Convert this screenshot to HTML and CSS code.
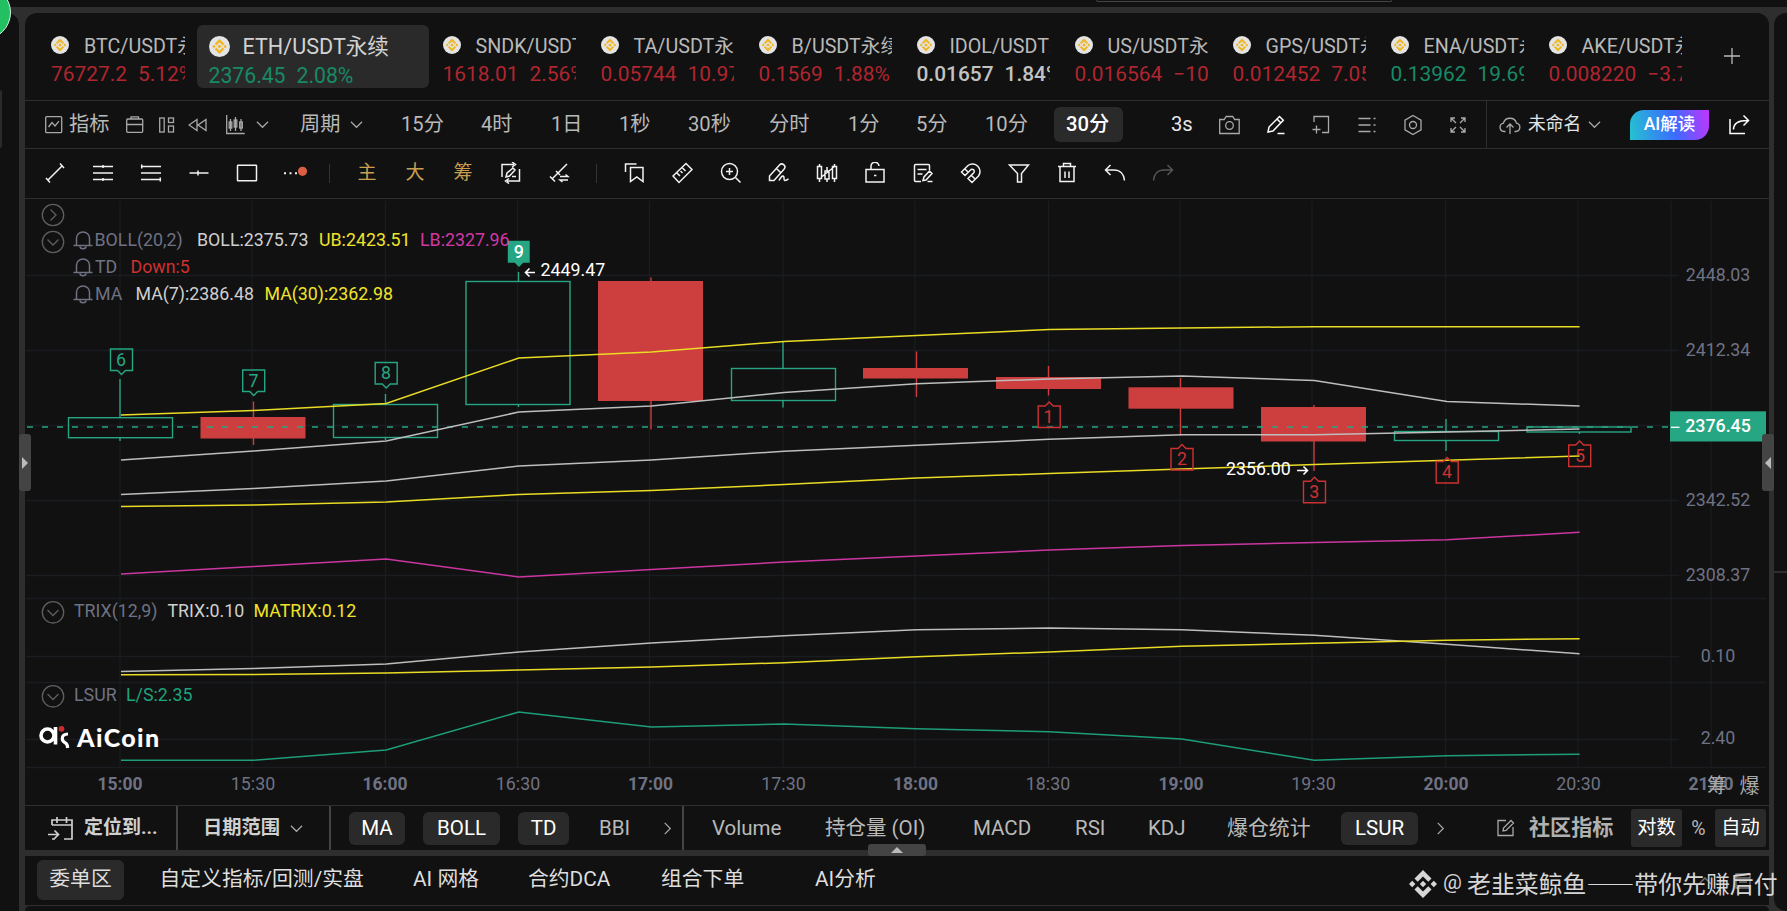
FILE: index.html
```html
<!DOCTYPE html>
<html lang="zh-CN">
<head>
    <meta charset="UTF-8">
    <title>AiCoin - ETH/USDT永续</title>
    <link rel="stylesheet" href="styles.css">
</head>
<body>
<svg class="defs" width="0" height="0">
    <symbol id="bnb" viewBox="0 0 20 20">
        <circle cx="10" cy="10" r="10" fill="#e4e4e4"/>
        <g fill="none" stroke="#efb621" stroke-width="2.2">
            <path d="M6.200 8.2 10 4.400l3.800 3.800M6.200 11.8l3.800 3.800 3.800-3.800"/>
        </g>
        <path d="M10 8 12 10 10 12 8 10zM4.700 8.400 6.300 10 4.700 11.600 3.100 10zM15.300 8.400l1.600 1.600-1.600 1.600-1.600-1.600z" fill="#efb621"/>
    </symbol>
    <symbol id="down" viewBox="0 0 14 14"><path d="M1 4l6 6 6-6"/></symbol>
    <symbol id="right" viewBox="0 0 14 14"><path d="M4 1l6 6-6 6"/></symbol>
</svg>
<div class="topbar"><div class="search"></div></div>
<div class="workspace">
    <aside class="side left"><div class="side-box"></div></aside>
    <main>
        <section class="panel">
            <div class="tabs">
                <div class="tab"><svg class="coin"><use href="#bnb"/></svg><span class="name">BTC/USDT永续</span><p class="down">76727.2<i></i>5.12%</p></div>
                <div class="tab active"><svg class="coin"><use href="#bnb"/></svg><span class="name">ETH/USDT永续</span><p class="up">2376.45<i></i>2.08%</p></div>
                <div class="tab"><svg class="coin"><use href="#bnb"/></svg><span class="name">SNDK/USDT永续</span><p class="down">1618.01<i></i>2.56%</p></div>
                <div class="tab"><svg class="coin"><use href="#bnb"/></svg><span class="name">TA/USDT永续</span><p class="down">0.05744<i></i>10.97%</p></div>
                <div class="tab"><svg class="coin"><use href="#bnb"/></svg><span class="name">B/USDT永续</span><p class="down">0.1569<i></i>1.88%</p></div>
                <div class="tab"><svg class="coin"><use href="#bnb"/></svg><span class="name">IDOL/USDT永续</span><p class="flat">0.01657<i></i>1.84%</p></div>
                <div class="tab"><svg class="coin"><use href="#bnb"/></svg><span class="name">US/USDT永续</span><p class="down">0.016564<i></i>−10.2%</p></div>
                <div class="tab"><svg class="coin"><use href="#bnb"/></svg><span class="name">GPS/USDT永续</span><p class="down">0.012452<i></i>7.05%</p></div>
                <div class="tab"><svg class="coin"><use href="#bnb"/></svg><span class="name">ENA/USDT永续</span><p class="up">0.13962<i></i>19.69%</p></div>
                <div class="tab"><svg class="coin"><use href="#bnb"/></svg><span class="name">AKE/USDT永续</span><p class="down">0.008220<i></i>−3.7%</p></div>
                <svg class="add" viewBox="0 0 16 16"><path d="M8 0v16M0 8h16"/></svg>
            </div>

            <div class="periods">
                <svg class="ic" viewBox="0 0 22 22"><rect x=".7" y="2.7" width="16" height="16" rx="1"/><path d="M3.5 13l3.5-4.500 3 3.500 4-4.800"/></svg>
                <span>指标</span>
                <svg class="ic" viewBox="0 0 22 22"><rect x=".7" y="5" width="16" height="13.300" rx="1"/><path d="M5 5V2.800h7.500V5M.7 10.500h16"/></svg>
                <svg class="ic" viewBox="0 0 22 22"><rect x=".7" y="4" width="4.500" height="14"/><rect x="9.500" y="4" width="5" height="4.500"/><rect x="9.500" y="12" width="5" height="6"/></svg>
                <svg class="ic" viewBox="0 0 22 22"><path d="M9 5.500v11L1 11zM18 5.500v11L10 11z"/></svg>
                <svg class="ic" viewBox="0 0 22 22"><path d="M.7 1v18.500h18M4.500 5v12M9.500 3v14M15 5v12"/><rect x="3.200" y="8" width="2.600" height="6"/><rect x="8.200" y="6" width="2.600" height="7"/><rect x="13.700" y="8" width="2.600" height="6"/></svg>
                <svg class="arrow"><use href="#down"/></svg>
                <span>周期</span>
                <svg class="arrow"><use href="#down"/></svg>
                <span>15分</span>
                <span>4时</span>
                <span>1日</span>
                <span>1秒</span>
                <span>30秒</span>
                <span>分时</span>
                <span>1分</span>
                <span>5分</span>
                <span>10分</span>
                <span class="current">30分</span>
                <span class="bright">3s</span>
                <svg class="ic" viewBox="0 0 22 22"><path d="M.7 5.500h4.500l2-3h6.500l2 3h4.500v14H.7z"/><circle cx="10.500" cy="11.500" r="3.800"/></svg>
                <svg class="ic white" viewBox="0 0 22 22"><path d="M1 18l1-5L12.500 2.500l3.800 3.800L6 17zM10.500 19.500h7M10 5l4 4"/></svg>
                <svg class="ic" viewBox="0 0 22 22"><path d="M2 8V2.500h14.500v16H10M4.500 11.500v8M.5 15.500h8"/></svg>
                <svg class="ic" viewBox="0 0 22 22"><path d="M.5 4.500h12M.5 11h12M.5 17.500h12M15.500 4.500h2M15.500 11h2M15.500 17.500h2"/></svg>
                <svg class="ic" viewBox="0 0 22 22"><path d="M9 1.500l8 4.700v9.600l-8 4.700-8-4.700V6.200z"/><circle cx="9" cy="11" r="3.500"/></svg>
                <svg class="ic" viewBox="0 0 22 22"><path d="M1 8V4h4M1 4l5 5M11 4h4v4M15 4l-5 5M1 14v4h4M1 18l5-5M11 18h4v-4M15 18l-5-5"/></svg>
                <div class="cloud">
                    <svg class="ic" viewBox="0 0 22 22"><path d="M6.500 17.500H5a4.200 4.200 0 0 1-.6-8.300 6.800 6.800 0 0 1 13.100 0 4.200 4.200 0 0 1-.5 8.300h-1.500M11 20v-9.500M7.500 13.500L11 10l3.500 3.500"/></svg>
                    <span>未命名</span>
                    <svg class="arrow"><use href="#down"/></svg>
                </div>
                <div class="ai">AI解读</div>
                <svg class="ic white" viewBox="0 0 22 22"><path d="M1 5v14.500h15M4.500 15.500c0-6 4-9 14-9M14.500 1.500l5 5-5 5"/></svg>
            </div>

            <div class="tools">
                <svg class="ic" viewBox="0 0 22 22"><path d="M4 18L18 4M16 1.500l4 4.500M2 16l4 4.500"/></svg>
                <svg class="ic" viewBox="0 0 22 22"><path d="M1 4.500h20M1 11h20M1 17.500h20M11 3v3M11 16v3"/></svg>
                <svg class="ic" viewBox="0 0 22 22"><path d="M1 4.500h20M1 11h20M1 17.500h20M1.700 2.500v4M20.300 15.500v4"/></svg>
                <svg class="ic" viewBox="0 0 22 22"><path d="M1.500 11h19M10 8.500v5"/></svg>
                <svg class="ic" viewBox="0 0 22 22"><rect x="1.500" y="3.300" width="19" height="15.500" rx=".5"/></svg>
                <svg class="ic more" viewBox="0 0 22 22"><path class="dots" d="M0 11.300h2M5.500 11.300h2M11 11.300h2"/><circle cx="18.500" cy="9.300" r="4.600" class="dot"/></svg>
                <b class="sep"></b>
                <span>主</span>
                <span>大</span>
                <span>筹</span>
                <svg class="ic" viewBox="0 0 22 22"><path d="M2 15V2.500h12M12 0l3.500 2.500L12 5M19.500 7v12H7M9 16.500L5.500 19 9 21.500M6 15l1-4 6-5 2 2-5.500 6zM12 14.500h4"/></svg>
                <svg class="ic" viewBox="0 0 22 22"><path d="M4 17L19 2M2 14.500l5 5M8 9l4 4M12 14.500h8l-2.500-2M20 18h-8l2.500 2"/></svg>
                <b class="sep"></b>
                <svg class="ic" viewBox="0 0 22 22"><path d="M1.500 10V2h11M6.500 5.500h12.500v14l-6.200-4.500-6.300 4.500z"/></svg>
                <svg class="ic" viewBox="0 0 22 22"><path d="M1 14L14 1.500l6 6L7 20.500zM5 11l3 3M8.500 9l2 2M10.500 6l3 3"/></svg>
                <svg class="ic" viewBox="0 0 22 22"><circle cx="9.500" cy="9.500" r="8"/><path d="M15.500 15.500l5 5M9.500 6v7M6 9.500h7"/></svg>
                <svg class="ic" viewBox="0 0 22 22"><path d="M1.500 18.500v-4.500L11.500 3a2.500 2.500 0 0 1 4.500 4.200L6 18.500zM8.500 6.500l4.500 4.500M11 18.500c3-5.500 5-5.500 5-2.500s0 3.500 4.500 1"/></svg>
                <svg class="ic" viewBox="0 0 22 22"><path d="M3.500 2v2.500M3.500 16.500V20M11 5v4M11 17v3M18.500 2v2.500M18.500 16.500V20"/><path d="M1.500 4.500h4v12h-4zM9 9h4v8H9zM16.500 4.500h4v12h-4zM5.500 15L18 5"/></svg>
                <svg class="ic" viewBox="0 0 22 22"><rect x="2" y="7.500" width="18" height="12.500"/><path d="M7 7.500V4.500a4 4 0 0 1 8-.5M10 13.500h2.400"/></svg>
                <svg class="ic" viewBox="0 0 22 22"><path d="M17.500 8V3.500a1 1 0 0 0-1-1h-13a1 1 0 0 0-1 1v15a1 1 0 0 0 1 1H9M5.500 7.500h9M5.500 12h5M11 18.500l1-3.500 5.500-6 2.500 2.500-6 6.500zM15.500 19.500h5"/></svg>
                <svg class="ic" viewBox="0 0 22 22"><path d="M1.500 10l6.500-6.500a7.500 7.500 0 0 1 10.500 10.500L12 20.500l-4-4 6-6a2.200 2.200 0 0 0-3-3l-6 6zM5 7l3.500 3.500M11.500 13.500l3.500 3.500"/></svg>
                <svg class="ic" viewBox="0 0 22 22"><path d="M1.500 3h19l-7 8.500v8.500h-4v-8.500z"/></svg>
                <svg class="ic" viewBox="0 0 22 22"><path d="M2 4.500h18M7.500 4V1.500h7V4M4 5v14.500h14V5M9 9.500v6.500M13 9.500v6.500"/></svg>
                <svg class="ic" viewBox="0 0 22 22"><path d="M6.500 3L1.500 8l5 5M1.500 8H10c6 0 10 4 10.500 10.500"/></svg>
                <svg class="ic off" viewBox="0 0 22 22"><path d="M15.500 3l5 5-5 5M20.500 8H12C6 8 2 12 1.500 18.500"/></svg>
            </div>

            <svg class="chart" viewBox="25 199 1744 606">
                <g class="grid">
                    <path d="M120 201V768M252 201V768M385.500 201V768M517.500 201V768M649.500 201V768M783 201V768M915 201V768M1048.500 201V768M1180 201V768M1312 201V768M1445.500 201V768M1578 201V768M1671 201V768M1711 201V768"/>
                    <path d="M26 275.500H1679M26 350.500H1679M26 425.500H1679M26 500.500H1679M26 575.500H1679M26 656.500H1679M26 739.500H1679"/>
                    <path d="M26 598.500H1766M26 682.500H1766M26 767.500H1766"/>
                </g>
                <!-- candles -->
                <g class="bull">
                    <path d="M120 379V418M120 438V441M385.500 394V405M385.500 438V440M518.500 272V282M518.500 405V407M783 341V369M783 400V407.500M1446 419V432M1446 441V451M1579.500 432V434"/>
                    <rect x="68.500" y="417.700" width="104" height="20"/>
                    <rect x="333.500" y="404.500" width="104" height="33"/>
                    <rect x="466" y="281.500" width="104" height="123"/>
                    <rect x="731.500" y="368.500" width="104" height="32"/>
                    <rect x="1394.500" y="431.500" width="104" height="9"/>
                    <rect x="1527" y="427" width="104" height="5"/>
                </g>
                <g class="bear">
                    <path d="M253.500 401.500V445M651 277.500V429.500M916.500 351.500V397M1048.500 366V395.500M1180.500 378V435.500M1314 405V471"/>
                    <rect x="200.500" y="417" width="105" height="21.500"/>
                    <rect x="598" y="281" width="105" height="120"/>
                    <rect x="863" y="368" width="105" height="10.500"/>
                    <rect x="996" y="377" width="105" height="12"/>
                    <rect x="1128.500" y="387.300" width="105" height="21.400"/>
                    <rect x="1261" y="407" width="105" height="34.500"/>
                </g>
                <path class="last" d="M27 427H1671"/>
                <g class="line">
                    <polyline class="yellow" points="121,415 253.600,410.500 386.200,403.500 518.800,358 651.400,352 784,341.500 916.600,335.500 1049.200,329.500 1181.800,328 1314.400,326.700 1447,326.700 1579.600,326.700"/>
                    <polyline class="white" points="121,460 253.600,451 386.200,441 518.800,412 651.400,406 784,392.500 916.600,383.700 1049.200,379 1181.800,376 1314.400,380.500 1447,401.500 1579.600,406"/>
                    <polyline class="white" points="121,494.500 253.600,488.500 386.200,481 518.800,466 651.400,460 784,451.300 916.600,445.300 1049.200,439.300 1181.800,434.700 1314.400,434.700 1447,432 1579.600,429"/>
                    <polyline class="yellow" points="121,506.500 253.600,505 386.200,502 518.800,494.500 651.400,490.500 784,484.500 916.600,478 1049.200,473.500 1181.800,469 1314.400,464.600 1447,460.300 1579.600,456"/>
                    <polyline class="pink" points="121,574 253.600,566.500 386.200,559 518.800,577 651.400,569.500 784,562 916.600,556 1049.200,550 1181.800,545.500 1314.400,542.600 1447,539.700 1579.600,532.300"/>
                    <polyline class="white" points="121,671.500 253.600,668.600 386.200,664 518.800,652 651.400,643 784,635.700 916.600,629.700 1049.200,628 1181.800,629.700 1314.400,635.300 1447,644.300 1579.600,653.700"/>
                    <polyline class="yellow" points="121,674.700 253.600,674.500 386.200,673 518.800,670 651.400,667 784,662.700 916.600,656.700 1049.200,652 1181.800,646.300 1314.400,643.300 1447,640.300 1579.600,638.700"/>
                    <polyline class="green" points="121,760.300 253.600,760.300 386.200,750 518.800,712 651.400,727 784,724 916.600,728.700 1049.200,731.700 1181.800,739 1314.400,760.300 1447,755.700 1579.600,754.200"/>
                </g>
                <!-- TD sequence marks -->
                <g class="td td-up">
                    <path d="M110.500 349h22v21.500h-7l-4 4-4-4h-7z"/><text x="121" y="366">6</text>
                    <path d="M242.700 370h22v21.500h-7l-4 4-4-4h-7z"/><text x="253.500" y="387">7</text>
                    <path d="M375.200 362.500h22V384h-7l-4 4-4-4h-7z"/><text x="386" y="379">8</text>
                    <path class="solid" d="M508.500 241.500h20.500V262h-6l-4 4-4-4h-6.500z"/><text class="solid-text" x="518.700" y="258">9</text>
                </g>
                <g class="td td-down">
                    <path d="M1038.200 427.500h22V406h-7l-4-4-4 4h-7z"/><text x="1048.500" y="423">1</text>
                    <path d="M1171 470h22v-21.500h-7l-4-4-4 4h-7z"/><text x="1182" y="465">2</text>
                    <path d="M1303.500 502.700h22v-21.500h-7l-4-4-4 4h-7z"/><text x="1314.300" y="498">3</text>
                    <path d="M1436.200 483h22v-21.500h-7l-4-4-4 4h-7z"/><text x="1447" y="478">4</text>
                    <path d="M1568.700 466.500h22V445h-7l-4-4-4 4h-7z"/><text x="1580" y="461.500">5</text>
                </g>
                <g class="note">
                    <path d="M535 272.500h-9.500M529.500 268.500l-4 4 4 4M1297 470.500h10.500M1303.500 466.500l4 4-4 4"/>
                    <text x="540.500" y="276.200">2449.47</text>
                    <text x="1226" y="475">2356.00</text>
                </g>
                <rect class="price-tag" x="1670" y="411.300" width="96" height="30.200"/>
                <path class="tick" d="M1671 427.300h8.500"/>
                <g class="axis">
                    <text x="1718" y="280.500">2448.03</text>
                    <text x="1718" y="355.500">2412.34</text>
                    <text class="now" x="1718" y="432">2376.45</text>
                    <text x="1718" y="505.500">2342.52</text>
                    <text x="1718" y="580.500">2308.37</text>
                    <text x="1718" y="661.500">0.10</text>
                    <text x="1718" y="744">2.40</text>
                    <text class="hour" x="120" y="789.500">15:00</text>
                    <text x="253" y="789.500">15:30</text>
                    <text class="hour" x="385" y="789.500">16:00</text>
                    <text x="518" y="789.500">16:30</text>
                    <text class="hour" x="650.500" y="789.500">17:00</text>
                    <text x="783.500" y="789.500">17:30</text>
                    <text class="hour" x="915.500" y="789.500">18:00</text>
                    <text x="1048" y="789.500">18:30</text>
                    <text class="hour" x="1181" y="789.500">19:00</text>
                    <text x="1313.500" y="789.500">19:30</text>
                    <text class="hour" x="1446" y="789.500">20:00</text>
                    <text x="1578.500" y="789.500">20:30</text>
                    <text class="hour" x="1711" y="789.500">21:00</text>
                    <text class="cjk" x="1717" y="793">筹</text>
                    <text class="cjk" x="1749.500" y="793">爆</text>
                </g>
                <!-- legends -->
                <g class="fold">
                    <circle cx="53" cy="215" r="10.700"/><path d="M50.500 209.500l5.500 5.500-5.500 5.500"/>
                    <circle cx="53" cy="242" r="10.700"/><path d="M47.500 239.500l5.500 5.500 5.500-5.500"/>
                    <circle cx="53" cy="612.300" r="10.700"/><path d="M47.500 610l5.500 5.500 5.500-5.500"/>
                    <circle cx="53" cy="696.300" r="10.700"/><path d="M47.500 694l5.500 5.500 5.500-5.500"/>
                </g>
                <g class="bell">
                    <path id="bell" d="M73.500 245.500h19M76.500 245.500v-7.500a6.500 6 0 0 1 13 0v7.500M80 246.500a3 2.200 0 0 0 6 0"/>
                    <use href="#bell" y="27"/>
                    <use href="#bell" y="54"/>
                </g>
                <g class="legend">
                    <text class="muted" x="94.500" y="246">BOLL(20,2)</text>
                    <text class="white" x="197" y="246">BOLL:2375.73</text>
                    <text class="yellow" x="319" y="246">UB:2423.51</text>
                    <text class="pink" x="420" y="246">LB:2327.96</text>
                    <text class="muted" x="95" y="273">TD</text>
                    <text class="red" x="130.500" y="273">Down:5</text>
                    <text class="muted" x="95" y="300">MA</text>
                    <text class="white" x="135.500" y="300">MA(7):2386.48</text>
                    <text class="yellow" x="264.500" y="300">MA(30):2362.98</text>
                    <text class="muted" x="74" y="616.500">TRIX(12,9)</text>
                    <text class="white" x="167.500" y="616.500">TRIX:0.10</text>
                    <text class="yellow" x="253.500" y="616.500">MATRIX:0.12</text>
                    <text class="muted" x="74" y="700.500">LSUR</text>
                    <text class="green" x="126" y="700.500">L/S:2.35</text>
                </g>
                <g class="brand">
                    <circle cx="47.500" cy="735.500" r="6.500"/>
                    <path d="M55.500 727v17.500"/>
                    <path class="thin" d="M68 734c-4 0-5.700 1.800-5.700 4.500 0 2.600 1.700 3.800 3.200 4.500 1.400.7 2 2.500 2.200 5"/>
                    <circle class="brand-dot" cx="61.500" cy="728.800" r="2.900"/>
                    <text x="77" y="747">AiCoin</text>
                </g>
            </svg>

            <div class="indicators">
                <svg class="cal" viewBox="0 0 26 26"><path d="M4 10V5h20v19H16M4 10h20M9 2v6M18.500 2v6M0 19.500h10M6.500 15.500l4 4-4 4M7 24h-3"/></svg>
                <strong class="locate">定位到...</strong>
                <div class="range"><strong>日期范围</strong><svg class="arrow"><use href="#down"/></svg></div>
                <div class="main-ind">
                    <span class="on ma">MA</span>
                    <span class="on boll">BOLL</span>
                    <span class="on tdi">TD</span>
                    <span class="bbi">BBI</span>
                    <svg class="arrow"><use href="#right"/></svg>
                </div>
                <div class="sub-ind">
                    <span>Volume</span>
                    <span>持仓量 (OI)</span>
                    <span>MACD</span>
                    <span>RSI</span>
                    <span>KDJ</span>
                    <span class="liq">爆仓统计</span>
                    <span class="on lsur">LSUR</span>
                    <svg class="arrow"><use href="#right"/></svg>
                </div>
                <div class="scale">
                    <svg class="edit" viewBox="0 0 18 18"><path d="M9 1.500H1v15h15V8M6 12l.5-3L14 1.500l2.500 2.500L9 11.500z"/></svg>
                    <strong>社区指标</strong>
                    <span class="sq">对数</span>
                    <span class="pct">%</span>
                    <span class="sq">自动</span>
                </div>
            </div>
        </section>
        <section class="orders">
            <span class="on">委单区</span>
            <span>自定义指标/回测/实盘</span>
            <span>AI 网格</span>
            <span>合约DCA</span>
            <span>组合下单</span>
            <span>AI分析</span>
            <svg class="win" viewBox="0 0 16 16"><path d="M2 11l6-6 6 6"/></svg>
            <svg class="win" viewBox="0 0 16 16"><path d="M1 1h14v14H1zM1 5h14M4 9h8"/></svg>
        </section>
        <section class="next"></section>
        <div class="handle handle-left"></div>
        <div class="handle handle-right"></div>
        <div class="handle handle-bottom"></div>
    </main>
    <aside class="side right"></aside>
</div>
<div class="bubble"></div>
<div class="watermark">
    <svg viewBox="0 0 28 28"><path d="M14 0l8.500 8.500-3.200 3.200L14 6.400l-5.300 5.300-3.200-3.200zM14 28l8.500-8.500-3.200-3.200-5.300 5.300-5.300-5.300-3.200 3.200zM14 10.800l3.200 3.200-3.200 3.200-3.200-3.200zM3.200 10.800L6.400 14l-3.200 3.200L0 14zM24.800 10.800L28 14l-3.200 3.200-3.200-3.200z"/></svg>
    <span class="at">@</span><span>老韭菜鲸鱼——带你先赚后付</span>
</div>
</body>
</html>
```
FILE: styles.css
```css
body {
    margin: 0;
    width: 1787px;
    height: 911px;
    overflow: hidden;
    position: relative;
    background: #2e2e2e;
    color: #b9b9b9;
    font-family: Roboto, "Noto Sans CJK SC", sans-serif;
    font-size: 20px;
}

.defs {
    display: block;
}

svg {
    flex: none;
}

.topbar {
    height: 7px;
    background: #111;
}

.search {
    box-sizing: border-box;
    width: 296px;
    height: 2px;
    margin-left: 1096px;
    border: 1px solid #444;
    border-top: 0;
    border-radius: 0 0 4px 4px;
}

.workspace {
    display: grid;
    grid-template-columns: 19px 1744px 13px;
    column-gap: 6px;
    padding-top: 6px;
    height: 898px;
}

.side {
    background: #111;
}

.left {
    border-radius: 0 12px 0 0;
    padding-top: 77px;
}

.side-box {
    width: 2px;
    height: 58px;
    background: #2a2a2a;
    border-radius: 0 4px 4px 0;
}

.right {
    margin-left: -1px;
    border-radius: 12px 0 0 12px;
    background: linear-gradient(#111 558px, #2e2e2e 558px, #2e2e2e 560px, #111 560px);
}

main {
    position: relative;
}

.panel {
    height: 837px;
    background: #111;
    border-radius: 12px 12px 0 0;
}

/* Market tabs */
.tabs {
    display: flex;
    box-sizing: border-box;
    height: 88px;
    padding: 12px 0 0 26px;
    border-bottom: 1px solid #2e2e2e;
}

.tab {
    width: 133.5px;
    height: 63px;
    margin-right: 24.5px;
    overflow: hidden;
    white-space: nowrap;
    font-size: 19.7px;
}

.coin {
    width: 18px;
    height: 18px;
    margin: 11px 15px 0 0;
    vertical-align: top;
}

.name {
    display: inline-block;
    line-height: 28px;
    margin-top: 8px;
}

.tab p {
    margin: 0;
    line-height: 27px;
    font-size: 20.9px;
}

.tab i {
    display: inline-block;
    width: 11px;
}

.tab.active {
    box-sizing: border-box;
    width: 232px;
    margin: 0 14px 0 -12.500px;
    padding-left: 12px;
    background: #2a2a2a;
    border-radius: 6px;
    font-size: 21.6px;
    color: #d2d2d2;
}

.active .coin {
    width: 21px;
    height: 21px;
    margin-right: 13px;
}

.active p {
    line-height: 30px;
    font-size: 21.2px;
}

.down {
    color: #b0252f;
}

.up {
    color: #178a66;
}

.flat {
    color: #c2c2c2;
    font-weight: 500;
}

.add {
    width: 16px;
    height: 16px;
    margin: 23px 0 0 17px;
    stroke: #b9b9b9;
    stroke-width: 1.300;
}

/* Toolbars */
.ic,
.arrow,
.cal,
.edit,
.win {
    width: 22px;
    height: 22px;
    fill: none;
    stroke: #a9a9a9;
    stroke-width: 1.300;
}

.arrow {
    width: 13px;
    height: 13px;
}

.periods {
    box-sizing: border-box;
    height: 48px;
    padding-left: 20px;
    display: grid;
    grid-template-columns: 25px 56px 33px 29px 38px 30px 45px 49px 52px 80px 70px 68px 69px 81px 79px 68px 69px 68px 118px 47px 48px 45px 46px 46px 46px 36px 144px 99px 22px;
    align-items: center;
    white-space: nowrap;
    line-height: 46px;
    font-size: 20.200px;
    border-bottom: 1px solid #2e2e2e;
}

.periods > span {
    height: 47px;
    margin-left: -1px;
}

.periods .current {
    box-sizing: border-box;
    justify-self: start;
    width: 69px;
    height: 35px;
    margin-left: 0;
    line-height: 34px;
    padding-left: 12px;
    border-radius: 6px;
    background: #2a2a2a;
    color: #fff;
    font-weight: 500;
}

.bright {
    color: #e8e8e8;
}

.periods .white {
    stroke: #fff;
    stroke-width: 1.500;
}

.cloud {
    box-sizing: border-box;
    height: 47px;
    display: flex;
    align-items: center;
    padding-left: 12px;
    gap: 7px;
    border-left: 1px solid #2e2e2e;
    font-size: 17.700px;
    color: #e4e4e4;
}

.cloud span {
    height: 47px;
}

.ai {
    width: 79px;
    height: 30px;
    line-height: 29px;
    border-radius: 14px 0;
    background: linear-gradient(80deg, #25c3cf, #3a6bff 55%, #c135ff);
    color: #fff;
    font-size: 17.500px;
    font-weight: 500;
    text-align: center;
}

.tools {
    box-sizing: border-box;
    height: 50px;
    padding: 0 0 1px 6px;
    display: flex;
    align-items: center;
    border-bottom: 1px solid #2e2e2e;
}

.tools .ic {
    margin: 0 13px;
    stroke: #f2f2f2;
    stroke-width: 1.500;
}

.tools .more {
    overflow: visible;
}

.tools .off {
    stroke: #555;
}

.tools .dot {
    fill: #d95f45;
    stroke: none;
}

.tools .dots {
    stroke-width: 2;
}

.tools span {
    width: 48px;
    line-height: 28px;
    text-align: center;
    font-size: 19px;
    color: #c9a052;
}

.sep {
    width: 1px;
    height: 19px;
    margin: 0 13px 0 10px;
    background: #333;
}

.sep ~ .sep {
    margin: 0 14px 0 13px;
}

/* Chart */
.chart {
    display: block;
    width: 1744px;
    height: 606px;
    font-size: 17.800px;
}

.grid {
    stroke: #1b1c20;
    stroke-width: 1.300;
}

.bull {
    fill: none;
    stroke: #27a683;
    stroke-width: 1.400;
}

.bear {
    fill: #cd3e3e;
}

.bear path {
    stroke: #cd3e3e;
    stroke-width: 1.400;
}

.last {
    stroke: #27a683;
    stroke-width: 1.600;
    stroke-dasharray: 6 9;
}

.line {
    fill: none;
    stroke-width: 1.500;
}

.line .yellow { stroke: #e9dc25; }
.line .white { stroke: #bdbdbd; }
.line .pink { stroke: #cc36a1; }
.line .green { stroke: #1d9e78; }

.td {
    fill: none;
    stroke-width: 1.400;
    text-anchor: middle;
}

.td text {
    stroke: none;
}

.td-up { stroke: #27a683; }
.td-up text { fill: #27a683; }
.td-down { stroke: #cd3131; }
.td-down text { fill: #cd3131; }
.td .solid { fill: #27a683; }
.td .solid-text { fill: #fff; font-weight: 500; }

.note {
    fill: none;
    stroke: #fff;
    stroke-width: 1.600;
}

.note text {
    stroke: none;
    fill: #fff;
}

.price-tag {
    fill: #27a683;
}

.tick {
    stroke: #fff;
    stroke-width: 1.300;
}

.axis {
    fill: #6f7283;
    text-anchor: middle;
}

.axis .now { fill: #fff; font-weight: 500; }
.axis .hour { font-weight: 700; font-size: 17.500px; }
.axis .cjk { fill: #a9a9a9; font-size: 20px; }

.fold {
    fill: none;
    stroke: #5e5e5e;
    stroke-width: 1.300;
}

.bell {
    fill: none;
    stroke: #6f7283;
    stroke-width: 1.500;
}

.legend .muted { fill: #6f7283; }
.legend .white { fill: #cfcfcf; }
.legend .yellow { fill: #f0e32a; }
.legend .pink { fill: #d038a5; }
.legend .red { fill: #cd3131; }
.legend .green { fill: #1fa37d; }

.brand {
    fill: none;
    stroke: #fff;
    stroke-width: 3.600;
}

.brand .thin {
    stroke-width: 3.200;
}

.brand .brand-dot {
    fill: #cf2b2b;
    stroke: none;
}

.brand text {
    fill: #fff;
    stroke: none;
    font-family: Lato, sans-serif;
    font-size: 25px;
    font-weight: 900;
    letter-spacing: 1.400px;
}

/* Indicator bar */
.indicators {
    box-sizing: border-box;
    height: 45px;
    display: flex;
    align-items: center;
    white-space: nowrap;
    border-top: 1px solid #2e2e2e;
    font-size: 20.500px;
    line-height: 33px;
}

.indicators strong {
    font-size: 19px;
    line-height: 33px;
    margin-bottom: 2px;
    color: #d0d0d0;
}

.cal {
    width: 26px;
    height: 26px;
    margin-left: 23px;
    stroke: #d0d0d0;
    stroke-width: 1.700;
}

.indicators .locate {
    width: 92px;
    margin-left: 10px;
}

.range {
    box-sizing: border-box;
    width: 155px;
    height: 44px;
    padding-left: 25px;
    display: flex;
    align-items: center;
    gap: 10px;
    border: solid #444;
    border-width: 0 2px;
}

.indicators .range strong {
    font-size: 19.300px;
}

.main-ind {
    box-sizing: border-box;
    width: 353px;
    height: 44px;
    display: flex;
    align-items: center;
    padding-left: 18px;
    border-right: 2px solid #444;
}

.on {
    height: 33px;
    line-height: 33px;
    border-radius: 6px;
    background: #2a2a2a;
    color: #fff;
    text-align: center;
}

.ma { width: 56px; }
.boll { width: 77px; margin-left: 18px; }
.tdi { width: 51px; margin-left: 18px; }
.bbi { width: 32px; margin: 0 30px 0 30px; }
.lsur { width: 77px; }
.liq { font-size: 20.900px; }

.sub-ind {
    width: 810px;
    display: grid;
    grid-template-columns: 113px 148px 102px 73px 79px 114px 93px 14px;
    align-items: center;
    padding-left: 28px;
    box-sizing: border-box;
}

.scale {
    display: flex;
    align-items: center;
}

.indicators .scale strong {
    width: 102px;
    margin-left: 14px;
    font-size: 21.100px;
    color: #b0b0b0;
}

.edit {
    width: 18px;
    height: 18px;
    margin-left: 3px;
}

.sq {
    width: 51px;
    height: 38px;
    line-height: 37px;
    border-radius: 3px;
    background: #2a2a2a;
    color: #fff;
    font-size: 19.200px;
    text-align: center;
}

.pct {
    width: 33px;
    text-align: center;
    font-size: 19.500px;
}

/* Orders bar */
.orders {
    box-sizing: border-box;
    height: 49px;
    margin-top: 6px;
    padding: 4px 0 0 12px;
    display: grid;
    grid-template-columns: 122.500px 253.500px 115px 133px 154px 882px 38px 16px;
    background: #111;
    color: #dedede;
    font-size: 20.800px;
    line-height: 39px;
    white-space: nowrap;
}

.orders .on {
    width: 87px;
    height: 40px;
    line-height: 39px;
    color: #dedede;
}

.win {
    width: 16px;
    height: 16px;
    margin-top: 13px;
    stroke: #777;
}

.next {
    height: 5px;
    margin-top: 1px;
    background: #111;
    border-radius: 12px 12px 0 0;
}

/* Resize handles, lying over the panel edges */
.handle {
    position: absolute;
    display: flex;
    align-items: center;
    justify-content: center;
    background: #444;
    border-radius: 3px;
}

.handle::after {
    content: "";
    border: 6px solid transparent;
}

.handle-left,
.handle-right {
    width: 12px;
    height: 57px;
    top: 421px;
}

.handle-left { left: -6px; }
.handle-right { right: -5px; }

.handle-left::after {
    border-left-color: #bbb;
    border-right: 0;
}

.handle-right::after {
    border-right-color: #bbb;
    border-left: 0;
}

.handle-bottom {
    left: 843px;
    top: 831px;
    width: 58px;
    height: 12px;
}

.handle-bottom::after {
    border-bottom-color: #bbb;
    border-top: 0;
}

.bubble {
    position: absolute;
    left: -44px;
    top: -15px;
    width: 53px;
    height: 53px;
    border: 1px solid #d8f5e4;
    border-radius: 50%;
    background: #22c062;
}

.watermark {
    position: absolute;
    left: 1409px;
    top: 864px;
    height: 40px;
    display: flex;
    align-items: center;
    white-space: nowrap;
    line-height: 37px;
    font-family: "Noto Sans CJK SC", sans-serif;
    font-size: 23.900px;
    color: #d6d6d6;
}

.watermark span {
    height: 40px;
}

.watermark svg {
    width: 28px;
    height: 28px;
    fill: #d6d6d6;
}

.watermark .at {
    width: 24px;
    margin-left: 6px;
    font-family: Roboto, sans-serif;
    font-size: 21px;
}
```
